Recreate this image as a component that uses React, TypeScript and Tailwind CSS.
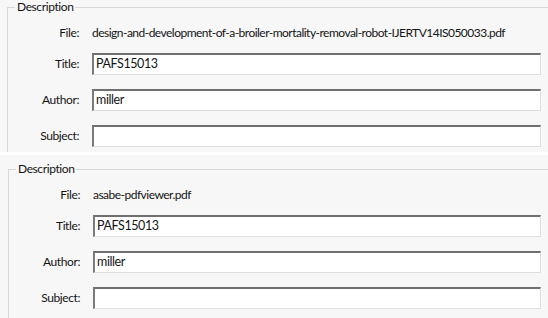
import React from "react";

const rows = [
  { label: "Title:", value: "PAFS15013" },
  { label: "Author:", value: "miller" },
  { label: "Subject:", value: "" },
];

const Field = ({ label, value }: { label: string; value: string }) => (
  <div className="flex items-center h-[22px]">
    <span className="w-[72px] text-right pr-[1px]">{label}</span>
    <div className="ml-[12px] flex-1 h-[22px] bg-white border-t-2 border-l-2 border-t-[#6f6f6f] border-l-[#7a7a7a] border-r border-b border-r-[#dedede] border-b-[#dedede] pl-[2px] flex items-center text-[12.5px]">
      {value}
    </div>
  </div>
);

const Panel = ({ file, top, left }: { file: string; top: string; left: string }) => (
  <div className={`bg-[#f7f7f7] h-full ${top}`}>
    <fieldset className={`border-t border-l border-[#d8d8d8] pr-[7px] h-full ${left}`}>
      <legend className="ml-[7px] px-[2px] leading-[14px]">Description</legend>
      <div className="flex items-center h-[22px] mt-[8px]">
        <span className="w-[72px] text-right pr-[1px]">File:</span>
        <span className="ml-[12px] whitespace-nowrap tracking-[-0.52px]">{file}</span>
      </div>
      <div className="mt-[9px] flex flex-col gap-[14px]">
        {rows.map((r) => (
          <Field key={r.label} label={r.label} value={r.value} />
        ))}
      </div>
    </fieldset>
  </div>
);

export default function App() {
  return (
    <div
      className="w-[548px] h-[318px] bg-white overflow-hidden text-[12px] tracking-[-0.4px] text-[#141414]"
      style={{ fontFamily: "Lato, 'Open Sans', sans-serif" }}
    >
      <div className="h-[152px] overflow-hidden">
        <Panel
          file="design-and-development-of-a-broiler-mortality-removal-robot-IJERTV14IS050033.pdf"
          top="pt-0"
          left="ml-[7px]"
        />
      </div>
      <div className="h-[163px] mt-[3px] overflow-hidden">
        <Panel file="asabe-pdfviewer.pdf" top="pt-[7px]" left="ml-[8px]" />
      </div>
    </div>
  );
}
